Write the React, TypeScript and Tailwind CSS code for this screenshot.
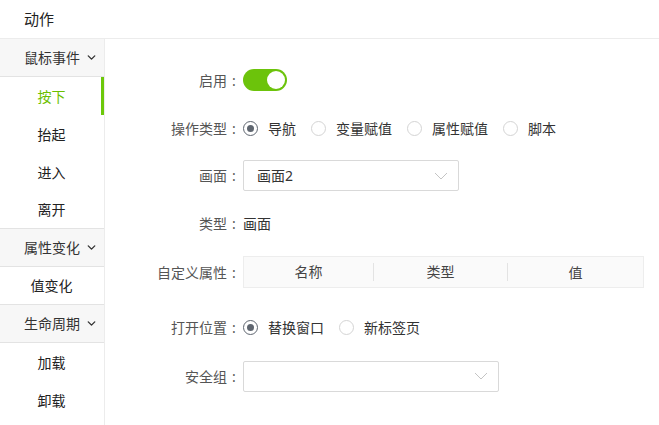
import { ChevronDown } from "lucide-react";

const font = "font-['Noto_Sans','Noto_Sans_CJK_SC',sans-serif]";

const groups = [
  { title: "鼠标事件", items: ["按下", "抬起", "进入", "离开"] },
  { title: "属性变化", items: ["值变化"] },
  { title: "生命周期", items: ["加载", "卸载"] },
];

const Radio = ({ checked, label }: { checked?: boolean; label: string }) => (
  <label className="flex items-center gap-[10px] mr-[15px]">
    <span
      className={
        "w-[15px] h-[15px] rounded-full border flex items-center justify-center bg-white " +
        (checked ? "border-[#5f6670]" : "border-[#d4d4d4]")
      }
    >
      {checked && <span className="w-[7px] h-[7px] rounded-full bg-[#5f6670]" />}
    </span>
    <span className="text-[#333]">{label}</span>
  </label>
);

const Select = ({ value, width }: { value?: string; width: string }) => (
  <div
    className={`${width} h-[31px] border border-[#d9d9d9] rounded-[2px] flex items-center justify-between pl-[13px] pr-[10px]`}
  >
    <span className="text-[#333]">{value}</span>
    <svg width="14" height="8" viewBox="0 0 14 8" fill="none">
      <path d="M1 1l6 6 6-6" stroke="#c4c4c4" strokeWidth="1" />
    </svg>
  </div>
);

const Row = ({ label, h, children }: { label: string; h: string; children: React.ReactNode }) => (
  <div className={`flex items-center ${h}`}>
    <div className="w-[138px] flex justify-end items-center text-[#555] pr-[2px] shrink-0">
      {label}
      <span className="w-[14px] text-center">:</span>
    </div>
    <div className="flex items-center">{children}</div>
  </div>
);

export default function App() {
  return (
    <div className={`${font} w-[659px] h-[425px] bg-white text-[14px] overflow-hidden`}>
      <div className="h-[39px] border-b border-[#ececec] flex items-center pl-[24px] text-[15px] text-[#222]">
        动作
      </div>
      <div className="flex">
        <div className="w-[105px] border-r border-[#ececec] shrink-0 h-[386px]">
          {groups.map((g) => (
            <div key={g.title}>
              <div className="h-[38px] bg-[#f7f7f7] border-b border-[#e3e3e3] flex items-center pl-[24px] gap-[5px] text-[#333]">
                {g.title}
                <ChevronDown className="w-[13px] h-[13px] text-[#333]" strokeWidth={2.5} />
              </div>
              {g.items.map((it, i) => {
                const active = g.title === "鼠标事件" && i === 0;
                const last = i === g.items.length - 1;
                return (
                  <div
                    key={it}
                    className={
                      "h-[38px] flex items-center justify-center pr-[1px] relative " +
                      (last && g.title !== "生命周期" ? "border-b border-[#e3e3e3] " : "") +
                      (active ? "text-[#6cbf00]" : "text-[#222]")
                    }
                  >
                    {it}
                    {active && <span className="absolute right-[0px] top-0 bottom-0 w-[3px] bg-[#6cc80a]" />}
                  </div>
                );
              })}
            </div>
          ))}
        </div>
        <div className="flex-1 pt-[20px]">
          <Row label="启用" h="h-[42px]">
            <div className="w-[44px] h-[22px] rounded-full bg-[#6cc30b] flex items-center justify-end pr-[2px]">
              <span className="w-[18px] h-[18px] rounded-full bg-white" />
            </div>
          </Row>
          <Row label="操作类型" h="h-[54px]">
            <Radio checked label="导航" />
            <Radio label="变量赋值" />
            <Radio label="属性赋值" />
            <Radio label="脚本" />
          </Row>
          <Row label="画面" h="h-[41px]">
            <Select value="画面2" width="w-[216px]" />
          </Row>
          <Row label="类型" h="h-[55px]">
            <span className="text-[#333]">画面</span>
          </Row>
          <Row label="自定义属性" h="h-[42px]">
            <div className="w-[401px] h-[32px] bg-[#fafafa] border border-[#ededed] flex items-center text-[#444]">
              <div className="w-[130px] text-center border-r border-[#e3e3e3] leading-[18px]">名称</div>
              <div className="w-[134px] text-center border-r border-[#e3e3e3] leading-[18px]">类型</div>
              <div className="flex-1 text-center">值</div>
            </div>
          </Row>
          <Row label="打开位置" h="h-[68px]">
            <Radio checked label="替换窗口" />
            <Radio label="新标签页" />
          </Row>
          <Row label="安全组" h="h-[30px]">
            <Select width="w-[256px]" />
          </Row>
        </div>
      </div>
    </div>
  );
}
